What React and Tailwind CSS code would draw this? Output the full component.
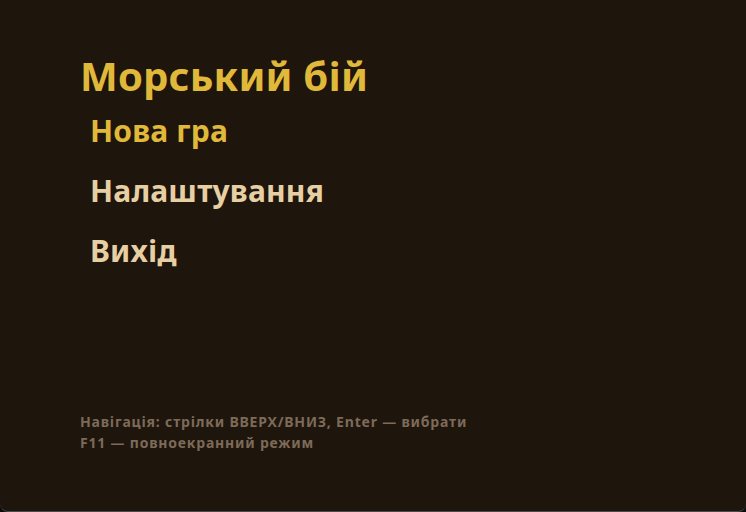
export default function App() {
  return (
    <div className="w-[746px] h-[512px] bg-[#0c0c0c]" style={{ fontFamily: '"Noto Sans", "Open Sans", sans-serif' }}>
      <div className="w-full h-full bg-[#1e150d] rounded-b-[8px] border-b border-[#4a4a4e] flex flex-col pl-[80px]">
        <h1 className="mt-[51px] text-[40px] leading-[50px] font-bold tracking-[0.2px] text-[#e0b83a]">Морський бій</h1>
        <div className="flex flex-col pl-[10px] mt-[0px]">
          <div className="text-[30px] leading-[60px] font-bold tracking-[0.2px] text-[#e0b83a]">Нова гра</div>
          <div className="text-[30px] leading-[60px] font-bold tracking-[0.2px] text-[#e6cfa2]">Налаштування</div>
          <div className="text-[30px] leading-[60px] font-bold tracking-[0.2px] text-[#e6cfa2]">Вихід</div>
        </div>
        <div className="mt-auto mb-[58px] text-[14px] leading-[21px] font-bold tracking-[0.8px] text-[#7d6a58]">
          <div>Навігація: стрілки ВВЕРХ/ВНИЗ, Enter — вибрати</div>
          <div>F11 — повноекранний режим</div>
        </div>
      </div>
    </div>
  );
}
